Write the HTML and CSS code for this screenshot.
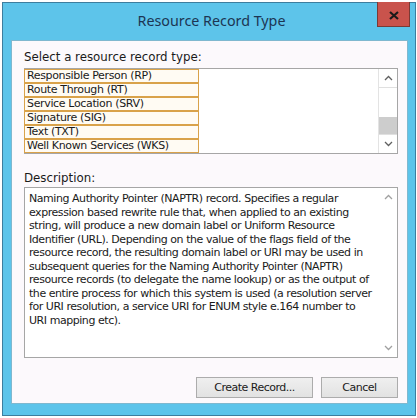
FILE: index.html
```html
<!DOCTYPE html>
<html>
<head>
<meta charset="utf-8">
<link rel="stylesheet" href="styles.css">
</head>
<body>
<div class="window">
  <div class="titlebar">
    <div class="title">Resource Record Type</div>
    <div class="close"><svg width="10" height="9" viewBox="0 0 10 9"><path d="M1 1 L9 8 M9 1 L1 8" stroke="#1a1a1a" stroke-width="2.2"/></svg></div>
  </div>
  <div class="content">
    <div class="label">Select a resource record type:</div>
    <div class="listbox">
      <div class="items">
        <div class="item">Responsible Person (RP)</div>
        <div class="item">Route Through (RT)</div>
        <div class="item">Service Location (SRV)</div>
        <div class="item">Signature (SIG)</div>
        <div class="item">Text (TXT)</div>
        <div class="item">Well Known Services (WKS)</div>
      </div>
      <div class="scrollbar">
        <div class="arrow"><svg width="9" height="6" viewBox="0 0 9 6"><path d="M1 5 L4.5 1.5 L8 5" fill="none" stroke="#606060" stroke-width="1.3"/></svg></div>
        <div class="track"><div class="thumb"></div></div>
        <div class="arrow"><svg width="9" height="6" viewBox="0 0 9 6"><path d="M1 1 L4.5 4.5 L8 1" fill="none" stroke="#606060" stroke-width="1.3"/></svg></div>
      </div>
    </div>
    <div class="label desc-label">Description:</div>
    <div class="descbox">
      <div class="desc">Naming Authority Pointer (NAPTR) record. Specifies a regular<br>expression based rewrite rule that, when applied to an existing<br>string, will produce a new domain label or Uniform Resource<br>Identifier (URL). Depending on the value of the flags field of the<br>resource record, the resulting domain label or URI may be used in<br>subsequent queries for the Naming Authority Pointer (NAPTR)<br>resource records (to delegate the name lookup) or as the output of<br>the entire process for which this system is used (a resolution server<br>for URI resolution, a service URI for ENUM style e.164 number to<br>URI mapping etc).</div>
      <div class="scrollbar light">
        <div class="arrow"><svg width="9" height="6" viewBox="0 0 9 6"><path d="M1 5 L4.5 1.5 L8 5" fill="none" stroke="#a0a0a0" stroke-width="1.3"/></svg></div>
        <div class="track"></div>
        <div class="arrow"><svg width="9" height="6" viewBox="0 0 9 6"><path d="M1 1 L4.5 4.5 L8 1" fill="none" stroke="#a0a0a0" stroke-width="1.3"/></svg></div>
      </div>
    </div>
    <div class="buttons">
      <div class="btn create">Create Record...</div>
      <div class="btn cancel">Cancel</div>
    </div>
  </div>
</div>
</body>
</html>
```
FILE: styles.css
```css
html, body { margin: 0; padding: 0; background: #ffffff; }
body { font-family: "DejaVu Sans", Verdana, sans-serif; font-size: 11px; color: #1a1a1a; }
.window {
  margin: 2px 1px 0 2px;
  box-sizing: border-box;
  width: 414px;
  height: 414px;
  border: 1px solid #3d7d9e;
  background: #5dc4ea;
  display: flex;
  flex-direction: column;
  padding: 0 7px 11px 8px;
}
.titlebar {
  height: 37px;
  flex: none;
  display: flex;
  align-items: flex-start;
  justify-content: center;
  position: relative;
}
.title {
  font-family: "Noto Sans", sans-serif;
  font-size: 14.3px;
  color: #1c3553;
  margin-top: 8px;
  padding-left: 4px;
}
.close {
  position: absolute;
  right: -2px;
  top: -1px;
  width: 33px;
  height: 25px;
  padding-top: 3px;
  background: #c9534c;
  border: 1px solid #7a3a35;
  border-top: none;
  display: flex;
  align-items: center;
  justify-content: center;
  box-sizing: border-box;
}
.content {
  flex: 1;
  background: #fcf9fc;
  border: 1px solid #7fb8cf;
  padding: 8px 9px 0 12px;
  display: flex;
  flex-direction: column;
}
.label { height: 16px; line-height: 16px; font-size: 11.8px; }
.listbox {
  margin-top: 3px;
  height: 84px;
  border: 1px solid #a6a6a6;
  background: #fff;
  display: flex;
}
.items { flex: 1; display: flex; flex-direction: column; margin-left: -1px; }
.item {
  width: 175px;
  height: 14px;
  box-sizing: border-box;
  border: 1px solid #d9a24a;
  background: #fffbf3;
  line-height: 12px;
  padding-left: 2px;
  letter-spacing: -0.35px;
  white-space: nowrap;
}
.scrollbar {
  width: 18px;
  flex: none;
  display: flex;
  flex-direction: column;
  border-left: 1px solid #e3e3e3;
  background: #fff;
}
.arrow {
  height: 18px;
  display: flex;
  align-items: center;
  justify-content: center;
  border-bottom: 1px solid #e0e0e0;
}
.arrow:last-child { border-bottom: none; border-top: 1px solid #e0e0e0; }
.track { flex: 1; position: relative; }
.thumb {
  position: absolute;
  left: 0; right: 0;
  bottom: 0;
  height: 17px;
  background: #cdcdcd;
}
.desc-label { margin-top: 16px; }
.descbox {
  margin-top: 1px;
  height: 169px;
  border: 1px solid #a6a6a6;
  background: #fff;
  display: flex;
}
.desc {
  flex: 1;
  min-width: 0;
  padding: 4px 0 0 4px;
  line-height: 13.5px;
  letter-spacing: -0.45px;
  white-space: nowrap;
}
.scrollbar.light { border-left: none; }
.scrollbar.light .arrow { border: none; }
.buttons {
  margin-top: 19px;
  display: flex;
  justify-content: flex-end;
  gap: 8px;
}
.btn {
  height: 21px;
  box-sizing: border-box;
  border: 1px solid #acacac;
  background: linear-gradient(#efefef, #e2e2e2);
  display: flex;
  align-items: center;
  justify-content: center;
  letter-spacing: -0.5px;
}
.create { width: 117px; }
.cancel { width: 77px; }
```
